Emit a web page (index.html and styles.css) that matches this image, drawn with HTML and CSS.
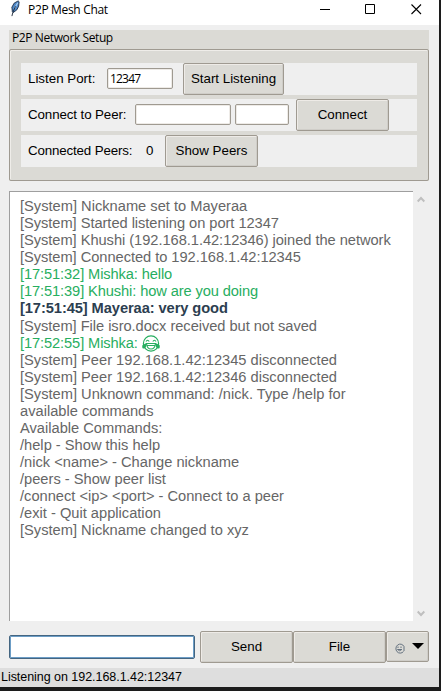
FILE: index.html
```html
<!DOCTYPE html>
<html lang="en">
<head>
<meta charset="utf-8">
<title>P2P Mesh Chat</title>
<link rel="stylesheet" href="styles.css">
</head>
<body>
<div class="window">
  <header class="titlebar">
    <svg class="feather" width="11" height="17" viewBox="0 0 11 19"><path d="M2 13 1.500 8 4 3.500 8.500 1 9.500 2 9 7 7 11 3 14Z" fill="#4c86c6" stroke="#1b2d46"/><path d="M8 3 4 10" stroke="#a9cdf0" stroke-width="1.300"/><path d="M5.500 7 2.500 14 1.500 18" fill="none" stroke="#182333"/></svg>
    <h1 class="title">P2P Mesh Chat</h1>
    <svg class="controls" width="55" height="12" viewBox="0 0 55 12" fill="none" stroke="#000"><path d="M0 5.500H10M45.500 .5H54.500V9.500H45.500Z"/></svg>
    <svg class="close" width="11" height="11" viewBox="0 0 11 11" fill="none" stroke="#000" stroke-width="1.100"><path d="M.5.5 10 10M10 .5.5 10"/></svg>
  </header>
  <section class="setup">
    <h2 class="setup-label">P2P Network Setup</h2>
    <div class="setup-frame">
      <div class="row"><span class="t listen">Listen Port:</span><span class="field port">12347</span><button class="btn start"><span>Start Listening</span></button></div>
      <div class="row"><span class="t connect">Connect to Peer:</span><span class="field host"></span><span class="field peer-port"></span><button class="btn conn"><span>Connect</span></button></div>
      <div class="row"><span class="t peers">Connected Peers:</span><span class="t count">0</span><button class="btn"><span>Show Peers</span></button></div>
    </div>
  </section>
  <main class="chat">
    <div class="log">
      <p>[System] Nickname set to Mayeraa</p>
      <p class="snug">[System] Started listening on port 12347</p>
      <p class="snug">[System] Khushi (192.168.1.42:12346) joined the network</p>
      <p class="snug">[System] Connected to 192.168.1.42:12345</p>
      <p class="peer tight">[17:51:32] Mishka: hello</p>
      <p class="peer tight">[17:51:39] Khushi: how are you doing</p>
      <p class="self">[17:51:45] Mayeraa: very good</p>
      <p class="snug">[System] File isro.docx received but not saved</p>
      <p class="peer tight">[17:52:55] Mishka: <svg class="joy" width="18" height="17" viewBox="0 0 18 17"><circle cx="9" cy="8.500" r="7.600" fill="none" stroke="#27ae60" stroke-width="1.200"/><path d="M4 6.500Q5.500 4 7.200 6.500M10.800 6.500Q12.500 4 14 6.500" fill="none" stroke="#27ae60" stroke-width="1.200"/><path d="M4.500 8.500H13.500Q13 14 9 14T4.500 8.500Z" fill="#fff" stroke="#27ae60" stroke-width="1.200"/><path d="M5 10.500H13" stroke="#27ae60"/><path d="M4.500 8 .5 10Q-.5 14 2 13.500T4.500 8ZM13.500 8 17.500 10Q18.500 14 16 13.500T13.500 8Z" fill="#27ae60"/></svg></p>
      <p>[System] Peer 192.168.1.42:12345 disconnected</p>
      <p>[System] Peer 192.168.1.42:12346 disconnected</p>
      <p>[System] Unknown command: /nick. Type /help for<br>available commands</p>
      <p>Available Commands:</p>
      <p>/help - Show this help</p>
      <p>/nick &lt;name&gt; - Change nickname</p>
      <p>/peers - Show peer list</p>
      <p>/connect &lt;ip&gt; &lt;port&gt; - Connect to a peer</p>
      <p>/exit - Quit application</p>
      <p>[System] Nickname changed to xyz</p>
    </div>
    <div class="scrollbar">
      <svg width="8" height="7" viewBox="0 0 8 7"><path d="M.7 5.500 4 2 7.300 5.500" fill="none" stroke="#bfbfbf" stroke-width="2"/></svg>
      <svg width="8" height="7" viewBox="0 0 8 7"><path d="M.7 1.500 4 5 7.300 1.500" fill="none" stroke="#bfbfbf" stroke-width="2"/></svg>
    </div>
  </main>
  <div class="composer">
    <div class="message"></div>
    <button class="btn"><span>Send</span></button>
    <button class="btn"><span>File</span></button>
    <button class="btn emoji"><svg width="10" height="11" viewBox="0 0 10 11" fill="none" stroke="#586776" stroke-width=".9"><path d="M8.500 8.500A4.300 4.500 0 1 1 9 3.500V8"/><path d="M3 3.500V5M6 3.500V5M2.500 6.500Q4.500 9 6.800 6.500Z"/></svg><svg width="12" height="6" viewBox="0 0 12 6"><path d="M0 0H12L6 6Z"/></svg></button>
  </div>
  <footer class="status"><span>Listening on 192.168.1.42:12347</span></footer>
</div>
</body>
</html>
```
FILE: styles.css
```css
* { box-sizing: border-box; }
body { margin: 0; width: 441px; height: 691px; background: #1c1c1c; overflow: hidden; font-family: "Liberation Sans", Arial, sans-serif; }
h1, h2, p { margin: 0; font-weight: 400; }
.window { width: 439px; height: 687px; background: #efefef; display: flex; flex-direction: column; }
.titlebar { height: 25px; background: #fff; display: flex; align-items: flex-start; }
.feather { margin-left: 10px; flex: none; }
.title { margin-left: 7px; width: 292px; flex: none; font: 12px/20px "Open Sans", sans-serif; letter-spacing: -.33px; color: #000; }
.controls { flex: none; margin-top: 4px; }
.close { margin: 4px 0 0 36px; flex: none; }
.setup { margin: 5px 10px 0 9px; height: 151px; background: #dbdad5; }
.setup-label { height: 19px; padding-left: 3px; font: 12px/16px "Open Sans", sans-serif; letter-spacing: -.4px; }
.setup-frame { height: 132px; border: 1px solid #9f9a91; border-radius: 2px; box-shadow: inset 1px 1px #efede9; padding: 13px 11px; display: flex; flex-direction: column; gap: 4px; }
.row { height: 32px; background: #efefef; display: flex; align-items: center; padding-left: 7px; }
.t { font-size: 13.33px; line-height: 16px; white-space: nowrap; flex: none; }
.listen { width: 79px; }
.connect { width: 107px; letter-spacing: -.1px; }
.peers { width: 118px; letter-spacing: -.15px; }
.count { width: 19px; }
.field { height: 21px; flex: none; background: #fff; border: 1px solid #9f9a91; border-radius: 2px; box-shadow: inset 0 0 0 1px #eeebe7; margin-top: -1px; }
.port { width: 66px; padding-left: 2px; font: 12px/19px "Open Sans", sans-serif; letter-spacing: -.8px; }
.host { width: 96px; }
.peer-port { width: 54px; margin-left: 4px; }
.btn { width: 93px; height: 32px; flex: none; margin: 0; padding: 0; border: 1px solid #9f9a91; border-radius: 2px; background: #dbdad5; box-shadow: inset 1px 1px #eeebe7, inset -1px -1px #cfcdc8; font: 13.33px/16px "Liberation Sans", Arial, sans-serif; color: #000; white-space: nowrap; }
.start { width: 101px; margin-left: 10px; }
.conn { margin-left: 7px; }
.chat { margin: 10px 10px 0 9px; height: 430px; display: flex; }
.log { width: 404px; background: #fff; border-left: 1px solid #9f9f9f; border-top: 1px solid #9f9f9f; padding: 6px 0 0 10px; font-size: 14.67px; line-height: 17px; color: #666; white-space: nowrap; }
.snug { letter-spacing: -.045px; }
.tight { letter-spacing: -.11px; }
.peer { color: #27ae60; }
.log .self { color: #2c3e50; font-weight: 700; height: 18px; letter-spacing: -.08px; }
.joy { vertical-align: top; }
.scrollbar { width: 16px; display: flex; flex-direction: column; justify-content: space-between; align-items: center; padding: 5px 0 4px; }
.composer { margin: 10px 10px 0 9px; height: 32px; display: flex; align-items: flex-start; }
.message { width: 186px; height: 24px; margin: 4px 5px 0 0; background: #fff; border: 1px solid #446580; border-radius: 2px; box-shadow: inset 0 0 0 1px #6c9dc6; }
.emoji { width: 43px; height: 31px; display: flex; align-items: center; gap: 7px; padding: 3px 0 0 8px; }
.emoji svg:last-child { margin-top: -5px; }
.status { margin-top: 5px; height: 19px; background: #dedede; padding-left: 1px; font-size: 12.5px; line-height: 19px; letter-spacing: -.04px; }
```
